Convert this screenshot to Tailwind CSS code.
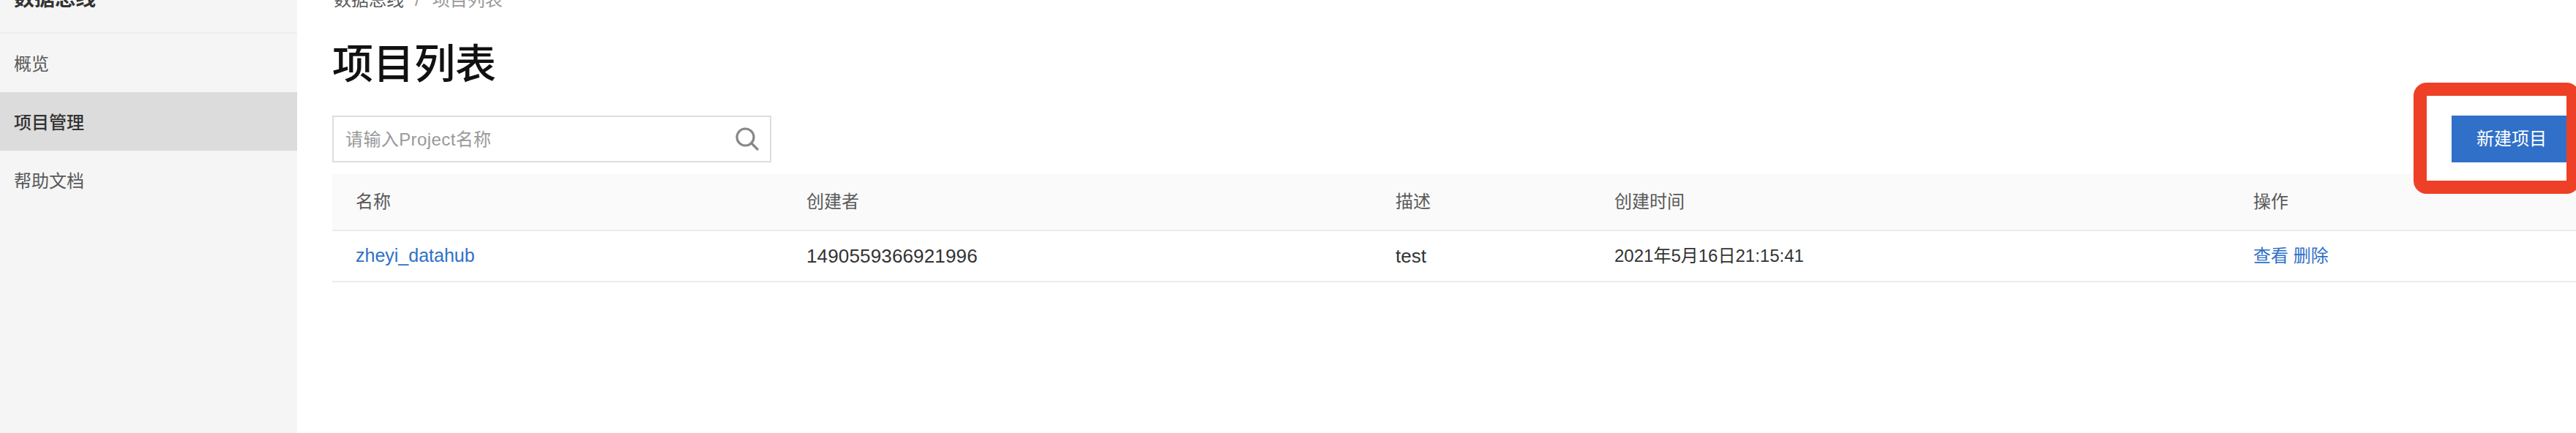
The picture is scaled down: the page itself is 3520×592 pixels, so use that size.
<!DOCTYPE html>
<html lang="zh-CN">
<head>
    <meta charset="UTF-8">
    <title>项目列表 - 数据总线</title>
    <script src="https://cdn.jsdelivr.net/npm/@tailwindcss/browser@4"></script>
</head>
<body class="bg-white text-[#333] font-['Liberation_Sans','Noto_Sans_CJK_SC',sans-serif]">
    <div class="relative flex w-[3520px] h-[592px] overflow-hidden">
        <aside class="w-[406px] h-full shrink-0 bg-[#f5f5f5]">
            <div class="flex items-end h-[46px] pl-[19px] pb-[29px] border-b-2 border-[#eeeeee]">
                <span class="text-[28px] leading-8 font-bold whitespace-nowrap">数据总线</span>
            </div>
            <nav class="text-2xl text-[#595959]">
                <a href="#" class="flex items-center h-20 pl-[19px] pt-[3px]">概览</a>
                <a href="#" class="flex items-center h-20 pl-[19px] pt-[3px] bg-[#dcdcdc] text-[#333] font-medium">项目管理</a>
                <a href="#" class="flex items-center h-20 pl-[19px] pt-[3px]">帮助文档</a>
            </nav>
        </aside>

        <main class="flex-1 pl-12 min-w-0">
            <div class="flex items-center h-8 -mt-4 text-2xl text-[#595959]">
                <span class="ml-0.5">数据总线</span>
                <span class="ml-[15px] text-[#999]">/</span>
                <span class="ml-[17px] text-[#999]">项目列表</span>
            </div>
            <h1 class="mt-[36px] h-[70px] text-[56px] leading-[72px] font-medium text-[#111]">项目列表</h1>

            <div class="flex justify-between mt-9 pr-[13px]">
                <div class="flex items-center w-[600px] h-16 pl-4 pr-[15px] border-2 border-[#dddddd]">
                    <input type="text" placeholder="请输入Project名称" class="flex-1 min-w-0 pt-0.5 text-2xl tracking-[0.4px] outline-none placeholder:text-[#999]">
                    <svg class="w-8 h-8 shrink-0" viewBox="0 0 32 32" fill="none" stroke="#888888" stroke-width="3.2" stroke-linecap="round">
                        <circle cx="13.5" cy="13.5" r="11.5"/>
                        <path d="M22 22l8 8"/>
                    </svg>
                </div>
                <button class="relative z-20 w-[157px] h-16 pl-[34px] text-left text-2xl text-white bg-[#3070c8]">新建项目</button>
            </div>

            <table class="mt-4 w-full table-fixed border-separate border-spacing-0 text-2xl">
                <thead class="bg-[#fafafa] text-[#595959]">
                    <tr>
                        <th class="w-[616px] h-[78px] px-8 text-left font-normal border-b-2 border-[#ebebeb]">名称</th>
                        <th class="w-[805px] px-8 text-left font-normal border-b-2 border-[#ebebeb]">创建者</th>
                        <th class="w-[299px] px-8 text-left font-normal border-b-2 border-[#ebebeb]">描述</th>
                        <th class="w-[873px] px-8 text-left font-normal border-b-2 border-[#ebebeb]">创建时间</th>
                        <th class="px-8 text-left font-normal border-b-2 border-[#ebebeb]">操作</th>
                    </tr>
                </thead>
                <tbody>
                    <tr>
                        <td class="h-[70px] px-8 text-[25px] border-b-2 border-[#ebebeb]"><a href="#" class="text-[#3070c8]">zheyi_datahub</a></td>
                        <td class="px-8 text-[26px] tracking-[0.15px] border-b-2 border-[#ebebeb]">1490559366921996</td>
                        <td class="px-8 text-[26px] border-b-2 border-[#ebebeb]">test</td>
                        <td class="px-8 border-b-2 border-[#ebebeb]">2021年5月16日21:15:41</td>
                        <td class="px-8 border-b-2 border-[#ebebeb] text-[#3070c8]"><a href="#">查看</a> <a href="#">删除</a></td>
                    </tr>
                </tbody>
            </table>
        </main>

        <!-- annotation drawn over the screenshot -->
        <div class="absolute z-10 left-[3298px] top-[113px] w-[227px] h-[152px] bg-white border-[18px] border-[#ee4026] rounded-[18px]"></div>
    </div>
</body>
</html>
